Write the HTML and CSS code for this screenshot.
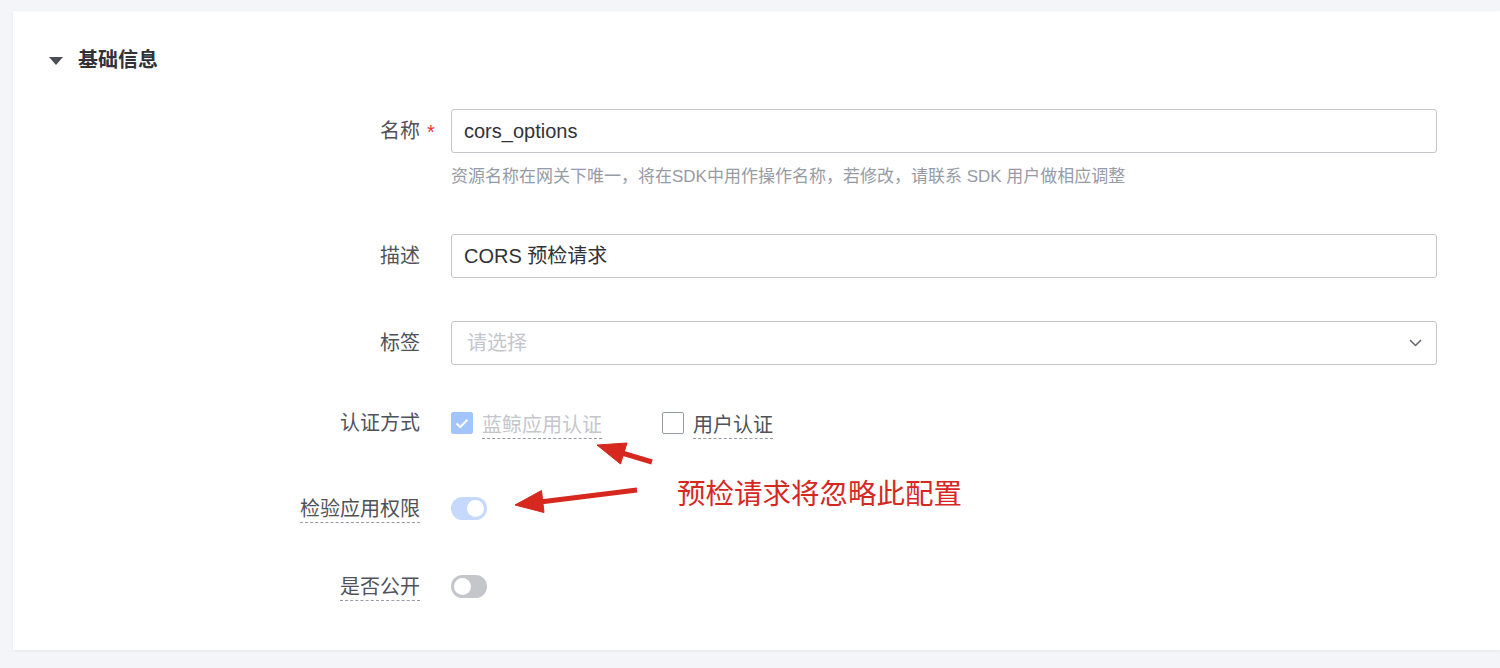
FILE: index.html
```html
<!DOCTYPE html>
<html lang="zh-CN">
<head>
<meta charset="utf-8">
<title>基础信息</title>
<link rel="stylesheet" href="styles.css">
</head>
<body>
<div class="page">
  <section class="card">
    <header class="card-head">
      <span class="caret"></span>
      <h2 class="card-title">基础信息</h2>
    </header>
    <form class="form">
      <div class="item item-name">
        <div class="label"><span class="label-text required">名称</span></div>
        <div class="content">
          <div class="input">cors_options</div>
          <p class="hint">资源名称在网关下唯一，将在SDK中用作操作名称，若修改，请联系 SDK 用户做相应调整</p>
        </div>
      </div>
      <div class="item item-desc">
        <div class="label"><span class="label-text">描述</span></div>
        <div class="content">
          <div class="input">CORS 预检请求</div>
        </div>
      </div>
      <div class="item item-tag">
        <div class="label"><span class="label-text">标签</span></div>
        <div class="content">
          <div class="input select">
            <span class="placeholder">请选择</span>
            <svg class="chevron" width="13" height="8" viewBox="0 0 13 8"><path d="M1 1 L6.5 6.5 L12 1" fill="none" stroke="#63656e" stroke-width="1.5"/></svg>
          </div>
        </div>
      </div>
      <div class="item item-auth">
        <div class="label label-sm"><span class="label-text">认证方式</span></div>
        <div class="content content-sm">
          <span class="check check-disabled">
            <span class="box box-on">
              <svg width="14" height="11" viewBox="0 0 14 11"><path d="M1.5 5.5 L5.2 9 L12.5 1.8" fill="none" stroke="#fff" stroke-width="2"/></svg>
            </span>
            <span class="check-text tip">蓝鲸应用认证</span>
          </span>
          <span class="check">
            <span class="box"></span>
            <span class="check-text tip">用户认证</span>
          </span>
        </div>
      </div>
      <div class="item item-perm">
        <div class="label label-sm"><span class="label-text tip">检验应用权限</span></div>
        <div class="content content-sm">
          <span class="switch switch-on"><span class="knob"></span></span>
        </div>
      </div>
      <div class="item item-public">
        <div class="label label-sm"><span class="label-text tip">是否公开</span></div>
        <div class="content content-sm">
          <span class="switch"><span class="knob"></span></span>
        </div>
      </div>
    </form>
  </section>

  <svg class="annot-arrows" width="1500" height="668" viewBox="0 0 1500 668">
    <g fill="#d6281f" stroke="#d6281f">
      <line x1="652" y1="462" x2="622" y2="453" stroke-width="5"/>
      <polygon points="597,445 627,443 620.5,464" stroke-width="1"/>
      <line x1="637" y1="490" x2="540" y2="502" stroke-width="5"/>
      <polygon points="515,505 541.5,490.5 544,512.5" stroke-width="1"/>
    </g>
  </svg>
  <div class="annot-text">预检请求将忽略此配置</div>
</div>
</body>
</html>
```

FILE: styles.css
```css
* { box-sizing: border-box; }

html, body {
  margin: 0;
  padding: 0;
  height: 100%;
}

body {
  background: #f4f5f8;
  font-family: "Liberation Sans", "Noto Sans CJK SC", sans-serif;
  color: #313238;
}

.page {
  position: relative;
  width: 1500px;
  height: 668px;
  padding: 11px 0 18px 13px;
  display: flex;
  overflow: hidden;
}

.card {
  flex: 1;
  background: #fff;
  box-shadow: 0 1px 3px rgba(0, 0, 0, 0.06);
  padding: 35px 63px 0 36px;
  height: 639px;
}

.card-head {
  display: flex;
  align-items: center;
  height: 28px;
}

.caret {
  width: 0;
  height: 0;
  border-left: 7.5px solid transparent;
  border-right: 7.5px solid transparent;
  border-top: 8px solid #4b4e56;
  margin-right: 15px;
  margin-top: 1px;
}

.card-title {
  margin: 0;
  font-size: 20px;
  line-height: 28px;
  font-weight: 700;
  color: #313238;
}

.form {
  margin: 35px 0 0 0;
  padding-left: 221px;
}

.item {
  display: flex;
  align-items: flex-start;
}

.item-desc, .item-tag { margin-top: 43px; }
.item-auth { margin-top: 42px; }
.item-perm { margin-top: 53px; }
.item-public { margin-top: 46px; }

.label {
  width: 150px;
  flex: none;
  height: 44px;
  display: flex;
  align-items: center;
  justify-content: flex-end;
  margin-right: 31px;
  font-size: 20px;
  color: #4f525a;
}

.label-sm { height: 32px; }

.label-text {
  position: relative;
  line-height: 24px;
  display: inline-block;
}

.tip {
  padding-top: 3px;
  padding-bottom: 1px;
  border-bottom: 1px dashed #979ba5;
}

.required::after {
  content: "*";
  position: absolute;
  left: 100%;
  top: 1px;
  margin-left: 7px;
  color: #ea3636;
  font-size: 20px;
}

.content {
  flex: 1;
  min-width: 0;
}

.content-sm {
  height: 32px;
  display: flex;
  align-items: center;
}

.input {
  height: 44px;
  border: 1px solid #c4c6cc;
  border-radius: 3px;
  padding: 0 12px;
  line-height: 42px;
  font-size: 20px;
  color: #313238;
  background: #fff;
  white-space: nowrap;
}

.select {
  display: flex;
  align-items: center;
  justify-content: space-between;
  padding: 0 14px 0 15px;
}

.placeholder {
  color: #c4c6cc;
}

.hint {
  margin: 0;
  padding: 12px 0 2px;
  font-size: 17px;
  line-height: 24px;
  color: #979ba5;
}

.check {
  display: inline-flex;
  align-items: center;
  font-size: 20px;
  color: #4f525a;
}

.check-disabled {
  margin-right: 60px;
  color: #c4c6cc;
}

.box {
  width: 22px;
  height: 22px;
  border: 1px solid #979ba5;
  border-radius: 2px;
  background: #fff;
  display: inline-flex;
  align-items: center;
  justify-content: center;
  margin-right: 9px;
}

.box-on {
  background: #a3c5fd;
  border-color: #a3c5fd;
}

.check-text {
  line-height: 24px;
  margin-top: 3px;
}

.switch {
  position: relative;
  width: 36px;
  height: 23px;
  border-radius: 12px;
  background: #c4c6cc;
  display: inline-block;
}

.switch-on {
  background: #c5d9fd;
}

.knob {
  position: absolute;
  top: 3px;
  left: 3px;
  width: 17px;
  height: 17px;
  border-radius: 50%;
  background: #fff;
}

.switch-on .knob {
  left: auto;
  right: 3px;
}

.annot-arrows {
  position: absolute;
  left: 0;
  top: 0;
  pointer-events: none;
}

.annot-text {
  position: absolute;
  left: 677px;
  top: 477px;
  font-family: "Noto Sans CJK SC", sans-serif;
  font-size: 28.5px;
  line-height: 29px;
  color: #d6281f;
  white-space: nowrap;
}
```
